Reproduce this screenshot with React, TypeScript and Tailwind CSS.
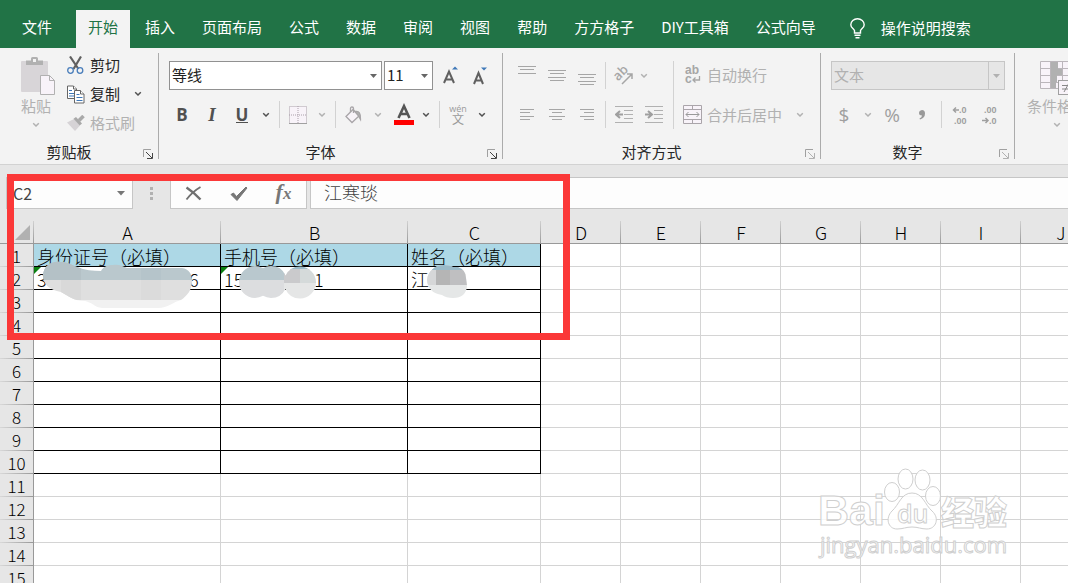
import React from "react";

const cjk = "font-['Noto_Sans_CJK_SC',sans-serif]";

type Kids = { children?: React.ReactNode };

function Chevron({ light = false, label = "更多选项" }: { light?: boolean; label?: string }) {
  return (
    <button aria-label={label} className="flex h-full w-[18px] shrink-0 items-center justify-center">
      <ChevronMark light={light} />
    </button>
  );
}

function ChevronMark({ light = false }: { light?: boolean }) {
  return (
    <svg width="8" height="6" viewBox="0 0 8 6" className={light ? "text-[#b1b1b1]" : "text-[#505050]"}>
      <path d="M1.2 1.2 4 4l2.800-2.800" fill="none" stroke="currentColor" strokeWidth="1.500" />
    </svg>
  );
}

function Tool({ label, children }: Kids & { label: string }) {
  return (
    <button aria-label={label} className="flex h-full w-[30px] shrink-0 items-center justify-center">
      {children}
    </button>
  );
}

function Group({ name, width, faded = false, children }: Kids & { name: string; width: string; faded?: boolean }) {
  return (
    <section aria-label={name} className={`flex shrink-0 flex-col border-r border-[#ababab] ${width}`}>
      <div className="h-[94px]">{children}</div>
      <div className="flex h-3 items-start">
        <span className="flex-1 text-center leading-[10px] text-[#262626]">{name}</span>
        <button aria-label={`${name}设置`} className="flex w-5 justify-center self-end">
          <svg width="10" height="10" viewBox="0 0 10 10" className={faded ? "text-[#b1b1b1]" : "text-[#444444]"}>
            <path d="M.5 8V.5H8" fill="none" stroke="#a0a0a0" />
            <path d="M3 3l6 6M9.500 4v5.500H4" fill="none" stroke="currentColor" />
          </svg>
        </button>
      </div>
    </section>
  );
}

function Sep() {
  return <span className="ml-1 mr-[3px] h-[27px] w-px shrink-0 bg-[#d2d2d2]" />;
}

function Picker({ label, value, width, faded = false }: { label: string; value: string; width: string; faded?: boolean }) {
  return (
    <div className={`relative h-[29px] shrink-0 ${width}`}>
      <select
        aria-label={label}
        defaultValue={value}
        className={`h-full w-full appearance-none border px-[2px] pb-[2px] text-[15px] outline-none ${
          faded ? "border-[#c6c6c6] bg-[#e6e6e6] text-[#b1b1b1]" : "border-[#919191] bg-white text-[#222222]"
        }`}
      >
        <option>{value}</option>
      </select>
      <span
        className={`pointer-events-none absolute inset-y-px right-px flex w-4 items-center justify-center ${
          faded ? "border-l border-[#c6c6c6] text-[#b1b1b1]" : "text-[#666666]"
        }`}
      >
        <svg width="7" height="4" viewBox="0 0 7 4">
          <path d="M0 0h7L3.500 4z" fill="currentColor" />
        </svg>
      </span>
    </div>
  );
}

function Lines({ rows, top = 0 }: { rows: [number, number][]; top?: number }) {
  return (
    <svg width="18" height="20" viewBox="0 0 18 20" shapeRendering="crispEdges">
      {rows.map(([x, w], i) => (
        <rect key={i} x={x} y={top + i * 3 + Math.floor(i / 2)} width={w} height="1" fill="#a6a6a6" />
      ))}
    </svg>
  );
}

function IndentIcon({ right = false }: { right?: boolean }) {
  return (
    <svg width="18" height="17" viewBox="0 0 18 17">
      <path d="M0 .5h18M9 4.500h9M9 8.500h9M9 12.500h9M0 16.500h18" stroke="#b1b1b1" />
      {right ? (
        <path d="M0 8.500h6M3 5l4 3.500L3 12" fill="none" stroke="#9f9f9f" strokeWidth="2" />
      ) : (
        <path d="M8 8.500H2M5 5 1 8.500 5 12" fill="none" stroke="#9f9f9f" strokeWidth="2" />
      )}
    </svg>
  );
}

function DecimalIcon({ more = false }: { more?: boolean }) {
  return (
    <svg
      width="17"
      height="20"
      viewBox="0 0 17 20"
      className="overflow-visible font-['Liberation_Sans',sans-serif] text-[9px] font-bold"
      fill="#9f9f9f"
    >
      {more ? (
        <>
          <text x="7" y="8">.0</text>
          <text x="2" y="19">.00</text>
          <path d="M7 5H1.500M4 2.500 1.500 5 4 7.500" fill="none" stroke="#9f9f9f" strokeWidth="1.500" />
        </>
      ) : (
        <>
          <text x="2" y="8">.00</text>
          <text x="7" y="19">.0</text>
          <path d="M0 15.500h6M3.500 13 6 15.500 3.500 18" fill="none" stroke="#9f9f9f" strokeWidth="1.500" />
        </>
      )}
    </svg>
  );
}

const tabs = ["文件", "开始", "插入", "页面布局", "公式", "数据", "审阅", "视图", "帮助", "方方格子", "DIY工具箱", "公式向导"];

function TabBar() {
  return (
    <nav className="flex h-12 shrink-0 items-end gap-[3px] bg-[#217346] pl-[10px] text-white">
      {tabs.map((t) => (
        <button
          key={t}
          className={`h-[38px] shrink-0 px-3 pb-[5px] ${t === "开始" ? "bg-[#f3f3f3] text-[#217346]" : ""} ${
            t === "文件" ? "mr-[9px]" : ""
          }`}
        >
          {t}
        </button>
      ))}
      <button className="ml-[19px] flex h-[38px] shrink-0 items-center gap-4 pb-[2px]">
        <svg width="15" height="21" viewBox="0 0 15 21" fill="none" stroke="white" strokeWidth="1.400">
          <path d="M4.500 15v-2.500C3.500 10.500.8 9.700.8 6.700a6.700 6 0 0 1 13.400 0c0 3-2.700 3.800-3.700 5.800V15zM4.500 17.300h6M5.500 19.800h4" />
        </svg>
        <span>操作说明搜索</span>
      </button>
    </nav>
  );
}

function Clipboard() {
  return (
    <Group name="剪贴板" width="w-[159px]">
      <div className="flex">
        <button className="ml-[18px] flex w-9 shrink-0 flex-col items-center pt-1 text-[#b1b1b1]">
          <svg width="34" height="38" viewBox="0 0 34 38" className="ml-1 shrink-0">
            <rect x="0" y="4" width="27" height="31" rx="1" fill="#d8d5d8" />
            <path d="M5 8V3.500h5V1.500Q10 0 11.500 0h4Q17 0 17 1.500v2h5V8z" fill="#b1b1b1" />
            <rect x="12" y="2" width="3" height="3" fill="#f3f3f3" />
            <path d="M19.500 18.500h9l5 5v14h-14z" fill="#f8f3f9" stroke="#b1b1b1" />
            <path d="M28.500 18.500v5h5" fill="none" stroke="#b1b1b1" />
          </svg>
          <span className="whitespace-nowrap leading-[22px]">粘贴</span>
          <span className="flex h-4 items-center">
            <ChevronMark light />
          </span>
        </button>
        <div className="ml-[13px] flex flex-col gap-[5px]">
          <button className="flex h-6 items-center gap-[5px] text-[#262626]">
            <svg width="18" height="19" viewBox="0 0 18 19" fill="none">
              <path d="M3 .5 11.500 13M14 .5 6.500 13" stroke="#606060" strokeWidth="2.200" />
              <circle cx="3.500" cy="14.500" r="2.800" stroke="#4a7ebb" strokeWidth="1.300" />
              <circle cx="13" cy="14.500" r="2.800" stroke="#4a7ebb" strokeWidth="1.300" />
            </svg>
            剪切
          </button>
          <div className="flex h-6 items-center gap-[9px]">
            <button className="flex items-center gap-[5px] text-[#262626]">
              <svg width="18" height="19" viewBox="0 0 18 19" fill="white" stroke="#666666">
                <path d="M.5 1h6l3 3v9.500h-9z" />
                <path d="M6.500 1v3h3" />
                <path d="M2 5.500h3M2 8.500h5M2 11h5" stroke="#3f78b8" />
                <path d="M7.500 5.500h6l3.500 3.500v9H7.500z" />
                <path d="M13.500 5.500V9H17" />
                <path d="M9.500 9.500h3M9.500 12.500h6M9.500 15.500h6" stroke="#3f78b8" />
              </svg>
              复制
            </button>
            <Chevron label="复制选项" />
          </div>
          <button className="flex h-6 items-center gap-[5px] text-[#b1b1b1]">
            <svg width="18" height="17" viewBox="0 0 18 17">
              <path d="M0 7.500 7 4l6 6.500L8 16z" fill="#d6d3d6" />
              <path d="M6.500 3.800 9 2l6 6.500-2.300 2z" fill="#a9a9a9" />
              <path d="M12 5.500 16.500 1" stroke="#a9a9a9" strokeWidth="3.500" />
            </svg>
            格式刷
          </button>
        </div>
      </div>
    </Group>
  );
}

function FontGroup() {
  return (
    <Group name="字体" width="w-[344px]">
      <div className="flex flex-col gap-[11px] pl-2 pt-2 text-[#505050]">
        <div className="flex h-[29px] gap-[2px] pl-[2px]">
          <Picker label="字体名称" value="等线" width="w-[213px]" />
          <Picker label="字号" value="11" width="w-[49px]" />
          <div className="flex">
            <Tool label="增大字号">
              <svg width="16" height="20" viewBox="0 0 16 20" className="overflow-visible">
                <path d="M2 17 7 5.500 12 17M4 13.500h6" fill="none" stroke="#606060" strokeWidth="2" />
                <path d="M10 3.500l3-3 3 3z" fill="#3f78b8" />
              </svg>
            </Tool>
            <Tool label="减小字号">
              <svg width="16" height="20" viewBox="0 0 16 20" className="overflow-visible">
                <path d="M2 18 6.500 7 11 18M3.500 14.500h6" fill="none" stroke="#606060" strokeWidth="2" />
                <path d="M9 1.500h6l-3 3z" fill="#3f78b8" />
              </svg>
            </Tool>
          </div>
        </div>
        <div className="flex h-[27px] items-center font-['Open_Sans',sans-serif] text-[17px]">
          <Tool label="加粗"><b>B</b></Tool>
          <Tool label="倾斜">
            <b className="font-['Liberation_Serif',serif] text-[19px] italic">I</b>
          </Tool>
          <Tool label="下划线">
            <span className="border-b border-[#505050] font-bold leading-[15px]">U</span>
          </Tool>
          <Chevron />
          <Sep />
          <Tool label="边框">
            <svg width="18" height="18" viewBox="0 0 18 18">
              <path d="M.5 .5h17v17H.5zM9 0v17M0 9h18" fill="#f8f3f9" stroke="#aaa0aa" strokeDasharray="1 1" />
              <path d="M0 17.500h18" stroke="#a0a0a0" />
            </svg>
          </Tool>
          <Chevron light />
          <Sep />
          <Tool label="填充颜色">
            <svg width="18" height="18" viewBox="0 0 18 18" fill="none" stroke="#a8a5a8" strokeWidth="1.300">
              <path d="M1 10.500 8 3.500l6 6.500-7 6.500z" fill="#f8f3f9" />
              <path d="M5.500 6V2.500Q5.500 1 7 1t1.500 1.500V7" />
              <path d="M10 5.500q6-1.500 5.500 8L13 9z" fill="#b1b1b1" />
            </svg>
          </Tool>
          <Chevron light />
          <Tool label="字体颜色">
            <svg width="20" height="20" viewBox="0 0 20 20" className="ml-1 overflow-visible">
              <path d="M4.500 13 10 1 15.500 13M6.500 9h7" fill="none" stroke="#555555" strokeWidth="2.600" />
              <rect y="15" width="20" height="5" fill="#ff0000" />
            </svg>
          </Tool>
          <Chevron />
          <Sep />
          <Tool label="拼音">
            <span className="flex flex-col items-center text-[#999999]">
              <span className="font-['Open_Sans',sans-serif] text-[9px] leading-[9px]">wén</span>
              <span className="font-['Noto_Sans_CJK_SC',sans-serif] text-[12px] leading-[12px]">文</span>
            </span>
          </Tool>
          <Chevron />
        </div>
      </div>
    </Group>
  );
}

function AlignGroup() {
  return (
    <Group name="对齐方式" width="w-[318px]" faded>
      <div className="flex pl-[9px] pt-2 text-[#b1b1b1]">
        <div className="flex flex-col gap-[11px]">
          <div className="flex h-[29px] items-center">
            <Tool label="顶端对齐"><Lines rows={[[0, 18], [2, 14], [0, 18]]} /></Tool>
            <Tool label="垂直居中"><Lines top={4} rows={[[0, 18], [2, 14], [0, 18], [2, 14]]} /></Tool>
            <Tool label="底端对齐"><Lines top={8} rows={[[0, 18], [2, 14], [0, 18], [2, 14]]} /></Tool>
            <span className="mx-[3px] h-[27px] w-px bg-[#d2d2d2]" />
            <Tool label="方向">
              <svg width="20" height="20" viewBox="0 0 20 20" className="overflow-visible">
                <text
                  x="3"
                  y="15"
                  transform="rotate(-45 4 14)"
                  className="font-['Open_Sans',sans-serif] text-[13px] font-semibold"
                  fill="#a6a6a6"
                >
                  ab
                </text>
                <path d="M8 18 18 8M13 8h5v5" fill="none" stroke="#a6a6a6" strokeWidth="1.500" />
              </svg>
            </Tool>
            <span className="-ml-1 h-full"><Chevron light /></span>
          </div>
          <div className="flex h-[27px] items-center">
            <Tool label="左对齐"><Lines top={4} rows={[[2, 14], [2, 10], [2, 14], [2, 10]]} /></Tool>
            <Tool label="居中"><Lines top={4} rows={[[1, 16], [4, 10], [1, 16], [4, 10]]} /></Tool>
            <Tool label="右对齐"><Lines top={4} rows={[[2, 14], [6, 10], [2, 14], [6, 10]]} /></Tool>
            <span className="mx-[3px] h-[27px] w-px bg-[#d2d2d2]" />
            <Tool label="减少缩进量"><IndentIcon /></Tool>
            <Tool label="增加缩进量"><IndentIcon right /></Tool>
          </div>
        </div>
        <span className="ml-1 mr-[9px] h-[68px] w-px bg-[#d2d2d2]" />
        <div className="flex flex-col gap-[11px]">
          <button className="flex h-[29px] items-center gap-[5px] pb-px">
            <svg
              width="19"
              height="20"
              viewBox="0 0 19 20"
              className="overflow-visible font-['Liberation_Sans',sans-serif] text-[12px] font-bold"
              fill="#a6a6a6"
            >
              <text x="2" y="9">ab</text>
              <text x="2" y="18">c</text>
              <path d="M16.500 11v4H10M12.500 12.500 10 15l2.500 2.500" fill="none" stroke="#a6a6a6" strokeWidth="1.300" />
            </svg>
            自动换行
          </button>
          <div className="flex h-[27px] items-center gap-[9px]">
            <button className="flex items-center gap-[5px]">
              <svg width="19" height="19" viewBox="0 0 19 19" fill="none" stroke="#aaa5aa">
                <path d="M.5 .5h18v18H.5zM.5 4.500h18M.5 14.500h18M9.500 .5v4M9.500 14.500v4" fill="#f8f3f9" />
                <path d="M3 9.500h13M5.500 7 3 9.500 5.500 12M13.500 7 16 9.500 13.500 12" stroke="#999999" />
              </svg>
              合并后居中
            </button>
            <Chevron light />
          </div>
        </div>
      </div>
    </Group>
  );
}

function NumberGroup() {
  return (
    <Group name="数字" width="w-[194px]" faded>
      <div className="flex flex-col gap-[11px] pl-2 pt-2 text-[#9f9f9f]">
        <div className="pl-[2px]">
          <Picker label="数字格式" value="文本" width="w-[174px]" faded />
        </div>
        <div className="flex h-[27px] items-center font-['Open_Sans',sans-serif] text-[19px]">
          <Tool label="会计数字格式">$</Tool>
          <Chevron light />
          <Tool label="百分比样式">%</Tool>
          <Tool label="千位分隔样式">
            <svg width="6" height="10" viewBox="0 0 6 10">
              <path d="M3 0q3 0 3 3.500Q6 8 1 9.500L.5 8.500Q3 7.500 3 5.500 0 5.500 0 3t3-3z" fill="#999999" />
            </svg>
          </Tool>
          <Sep />
          <Tool label="增加小数位数"><DecimalIcon more /></Tool>
          <Tool label="减少小数位数"><DecimalIcon /></Tool>
        </div>
      </div>
    </Group>
  );
}

function Ribbon() {
  return (
    <div className="flex shrink-0 overflow-hidden border-b border-[#d2d2d2] bg-[#f3f3f3] py-[5px]">
      <Clipboard />
      <FontGroup />
      <AlignGroup />
      <NumberGroup />
      <button className="ml-3 flex shrink-0 flex-col items-center pt-2 text-[#b1b1b1]">
        <svg width="34" height="34" viewBox="0 0 34 34">
          <path d="M.5 .5h32v27H.5zM.5 7.500h32M.5 14.500h32M.5 21.500h32M10.500 .5v27M22.500 .5v27" fill="#f8f3f9" stroke="#bbb6bb" />
          <path d="M11 1h7v7h4v6h-5v7h-1v6h-5z" fill="#b1b1b1" />
          <rect x="18.500" y="19.500" width="15" height="14" fill="#f8f3f9" stroke="#a0a0a0" />
          <path d="M22 24.500h9M22 28h9M29 22l-5 9" stroke="#888888" />
        </svg>
        <span className="leading-[22px]">条件格式</span>
        <span className="flex h-4 items-center">
          <ChevronMark light />
        </span>
      </button>
    </div>
  );
}

function FormulaBar() {
  return (
    <div className="flex h-14 shrink-0 items-start bg-[#e6e6e6] pl-[6px] pt-3 text-[#444444]">
      <div className="flex h-8 w-[127px] shrink-0 items-center border border-[#c6c6c6] bg-[#fdfdfd] pr-[7px]">
        <input aria-label="名称框" defaultValue="C2" className="w-0 flex-1 bg-transparent pl-[6px] text-[16px] outline-none" />
        <svg width="8" height="5" viewBox="0 0 8 5">
          <path d="M0 0h8L4 4.500z" fill="#777777" />
        </svg>
      </div>
      <span className="flex h-8 w-[37px] shrink-0 flex-col items-center justify-center gap-[2px]">
        <i className="h-[3px] w-[3px] bg-[#b1b1b1]" />
        <i className="h-[3px] w-[3px] bg-[#b1b1b1]" />
        <i className="h-[3px] w-[3px] bg-[#b1b1b1]" />
      </span>
      <div className="flex h-8 w-[137px] shrink-0 items-center border border-[#c6c6c6] bg-[#fdfdfd]">
        <button aria-label="取消" className="flex w-[45px] justify-center">
          <svg width="17" height="15" viewBox="0 0 17 15" fill="none" stroke="#707070">
            <path d="M1.500 1.500Q9 6.500 15.500 13.500" strokeWidth="2.400" />
            <path d="M15.500 1Q7 6 1.500 13.500" strokeWidth="1.800" />
          </svg>
        </button>
        <button aria-label="输入" className="flex w-[45px] justify-center">
          <svg width="18" height="15" viewBox="0 0 18 15">
            <path d="M1 8.500 3.500 7l3 3.500L16 1l1 1L7 14.500z" fill="#777777" stroke="#777777" />
          </svg>
        </button>
        <button aria-label="插入函数" className="flex w-[45px] justify-center">
          <span className="font-['Liberation_Serif',serif] text-[22px] font-bold italic leading-6 text-[#777777]">
            f<span className="text-[17px]">x</span>
          </span>
        </button>
      </div>
      <input
        aria-label="编辑栏"
        defaultValue="江寒琰"
        className="ml-[3px] h-8 min-w-0 flex-1 border border-r-0 border-[#c6c6c6] bg-[#fdfdfd] pb-[2px] pl-[13px] text-[18px] font-light outline-none"
      />
    </div>
  );
}

const columns = ["A", "B", "C", "D", "E", "F", "G", "H", "I", "J"];
const rowNumbers = Array.from({ length: 15 }, (_, i) => i + 1);
const headings = ["身份证号（必填）", "手机号（必填）", "姓名（必填）"];

function ErrorCorner() {
  return (
    <svg width="7" height="7" viewBox="0 0 7 7" className="absolute left-0 top-0">
      <path d="M0 0h7L0 7z" fill="#0b8010" />
    </svg>
  );
}

function IdCell() {
  return (
    <div className="relative flex h-[22px] items-center pl-[3px] pt-[2px]">
      <ErrorCorner />
      <span className="w-[152px]">3</span>
      <span>6</span>
      <svg width="150" height="48" viewBox="0 0 150 48" className="absolute left-[9px] top-[-6px]">
        <clipPath id="id-mask">
          <path d="M0 14C1 5 8 0 17 1c7 0 10 2 17 5 8 3 16 4 24 4 2-4 6-6 12-6 6-1 9 1 14 3h55c7 1 10 6 10 13 0 9-5 15-11 19-8 2-13 8-23 8H61c-10 0-8-4-19-7-11 0-17-5-24-9C6 29 0 23 0 14z" />
        </clipPath>
        <g clipPath="url(#id-mask)">
          <rect width="150" height="19" fill="#bac8cd" />
          <rect width="38" height="19" fill="#b4c1c6" />
          <rect x="98" width="20" height="19" fill="#b5c4ca" />
          <rect y="19" width="150" height="20" fill="#dfdfdf" />
          <rect x="18" y="19" width="20" height="20" fill="#d9d9d9" />
          <rect x="98" y="19" width="20" height="20" fill="#dbdbdb" />
          <rect y="39" width="150" height="9" fill="#f1f1f1" />
        </g>
      </svg>
    </div>
  );
}

function PhoneCell() {
  return (
    <div className="relative flex h-[22px] items-center pl-[3px] pt-[2px]">
      <ErrorCorner />
      <span className="w-[90px]">15</span>
      <span>1</span>
      <svg width="78" height="33" viewBox="0 0 78 33" className="absolute left-[18px] top-[-1px]">
        <clipPath id="phone-mask">
          <circle cx="16" cy="16" r="16" />
          <circle cx="32" cy="16" r="16" />
          <circle cx="61" cy="16.500" r="16" />
        </clipPath>
        <g clipPath="url(#phone-mask)">
          <rect width="46" height="14" fill="#b9c8ce" />
          <rect y="14" width="46" height="19" fill="#dcdddf" />
          <rect x="45" width="33" height="4" fill="#9cbbc8" />
          <rect x="45" y="3" width="16" height="14" fill="#cacacc" />
          <rect x="61" y="3" width="17" height="14" fill="#d5dada" />
          <rect x="45" y="17" width="33" height="16" fill="#e5e6e6" />
        </g>
      </svg>
    </div>
  );
}

function NameCell() {
  return (
    <div className="relative flex h-[22px] items-center pl-[3px] pt-[2px]">
      江
      <svg width="41" height="34" viewBox="0 0 41 34" className="absolute left-[19px] top-[-2px]">
        <clipPath id="name-mask">
          <path d="M0 15C1 6 8 0 17 0q6 0 9 2h5q8 3 8 11l1 8q-1 12-14 12-7 0-11-3Q1 28 0 15z" />
        </clipPath>
        <g clipPath="url(#name-mask)">
          <rect width="41" height="34" fill="#e5e7e7" />
          <rect width="41" height="5" fill="#9abac8" />
          <rect y="5" width="9" height="15" fill="#d6d7d8" />
          <rect x="9" y="5" width="14" height="15" fill="#b5b5b5" />
          <rect x="23" y="5" width="18" height="15" fill="#bfbfc1" />
        </g>
      </svg>
    </div>
  );
}

function cellContent(row: number, col: number) {
  if (row === 1 && col < 3) return <div className="pl-[3px] pt-[2px] leading-5">{headings[col]}</div>;
  if (row !== 2) return null;
  if (col === 0) return <IdCell />;
  if (col === 1) return <PhoneCell />;
  if (col === 2) return <NameCell />;
  return null;
}

function Sheet() {
  return (
    <div className="min-h-0 flex-1 overflow-hidden bg-white">
      <table className="w-[1101px] table-fixed border-separate border-spacing-0 whitespace-nowrap text-[18px] font-light leading-[22px] text-black">
        <colgroup>
          <col className="w-[34px]" />
          <col className="w-[187px]" />
          <col className="w-[187px]" />
          <col className="w-[133px]" />
          {columns.slice(3).map((c) => (
            <col key={c} className="w-[80px]" />
          ))}
        </colgroup>
        <thead>
          <tr className="h-[23px]">
            <th className="border-b border-[#999999] bg-[#e6e6e6] bg-[linear-gradient(to_bottom,#d0d0d0,#999999)] bg-[length:1px_100%] bg-right bg-no-repeat p-0">
              <svg width="16" height="15" viewBox="0 0 16 15" className="ml-[15px]">
                <path d="M15 0v15H0z" fill="#b1b1b1" />
              </svg>
            </th>
            {columns.map((c) => (
              <th
                key={c}
                scope="col"
                className="border-b border-[#999999] bg-[#e6e6e6] bg-[linear-gradient(to_bottom,#d0d0d0,#999999)] bg-[length:1px_100%] bg-right bg-no-repeat p-0 font-light"
              >
                {c}
              </th>
            ))}
          </tr>
        </thead>
        <tbody>
          {rowNumbers.map((r) => (
            <tr key={r} className="h-[23px]">
              <th
                scope="row"
                className="border-r border-[#999999] bg-[#e6e6e6] bg-[linear-gradient(to_right,#d8d8d8,#999999)] bg-[length:100%_1px] bg-bottom bg-no-repeat p-0 text-[17px] font-light"
              >
                {r}
              </th>
              {columns.map((c, i) => (
                <td
                  key={c}
                  className={`border-b border-r p-0 ${i < 3 && r <= 10 ? "border-black" : "border-[#d4d4d4]"} ${
                    i < 3 && r === 1 ? "bg-[#add8e6]" : ""
                  }`}
                >
                  {cellContent(r, i)}
                </td>
              ))}
            </tr>
          ))}
        </tbody>
      </table>
    </div>
  );
}

function Watermark() {
  return (
    <svg
      width="200"
      height="94"
      viewBox="0 0 200 94"
      className="pointer-events-none absolute bottom-[21px] right-[54px] overflow-visible"
      fill="white"
      fillOpacity="0.85"
      stroke="#cfcfcf"
      strokeWidth="1"
    >
      <text x="4" y="57" className="font-['Liberation_Sans',sans-serif] text-[43px] font-bold">Bai</text>
      <ellipse cx="78" cy="24" rx="7.500" ry="9.500" />
      <ellipse cx="91.500" cy="11" rx="7.500" ry="10" />
      <ellipse cx="108.500" cy="12" rx="7.500" ry="10" />
      <ellipse cx="119" cy="28" rx="7.500" ry="9.500" />
      <path d="M98 25c11 0 13 12 20 18 8 7 4 18-5 18-6 0-9-2-15-2s-9 2-15 2c-9 0-12-11-5-18 7-6 9-18 20-18z" />
      <text x="83" y="55" className="font-['Open_Sans',sans-serif] text-[25px] font-semibold">du</text>
      <text x="127" y="57" className="font-['Noto_Sans_CJK_SC',sans-serif] text-[33px] font-black">经验</text>
      <text x="6" y="85" className="font-['Open_Sans',sans-serif] text-[22px] font-medium">jingyan.baidu.com</text>
    </svg>
  );
}

export default function App() {
  return (
    <div className={`relative flex h-screen flex-col overflow-hidden bg-white text-[15px] leading-5 ${cjk}`}>
      <TabBar />
      <Ribbon />
      <FormulaBar />
      <Sheet />
      <div className="pointer-events-none absolute left-[7px] top-[174px] h-[166px] w-[563px] border-[7px] border-[#fb3838]" />
      <Watermark />
    </div>
  );
}
